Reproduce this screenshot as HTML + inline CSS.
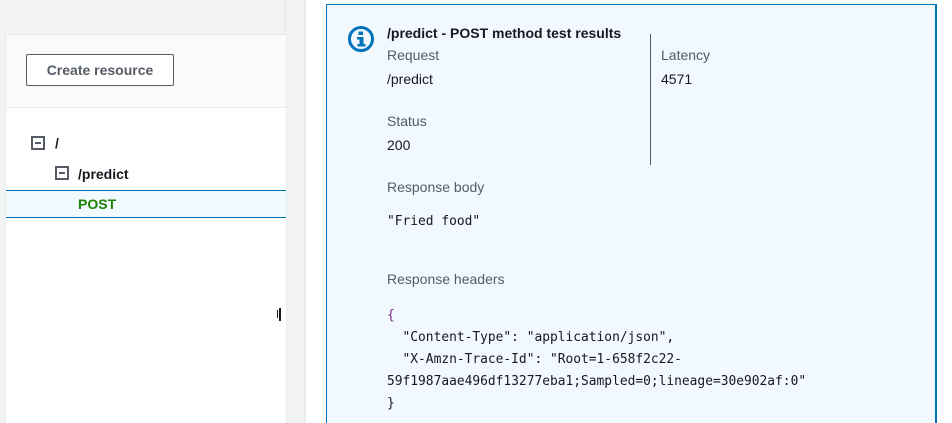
<!DOCTYPE html>
<html style="overflow:hidden"><head><style>
*{margin:0;padding:0;box-sizing:border-box}
body{width:952px;height:423px;overflow:hidden;background:#fff;font-family:"Liberation Sans",Arial,sans-serif;position:relative}
.a{position:absolute}
.lab{color:#545b64;font-size:14px}
.val{color:#16191f;font-size:14px}
.mono{font-family:"DejaVu Sans Mono","Liberation Mono",monospace;font-size:12.9px;color:#16191f}
</style></head><body>
<div class="a" style="left:0;top:0;width:304px;height:423px;background:#f2f3f3"></div>
<div class="a" style="left:304px;top:0;width:2px;height:423px;background:#e9ebed"></div>
<div class="a" style="left:285px;top:0;width:1px;height:423px;background:#e3e5e7"></div>
<div class="a" style="left:6px;top:35px;width:280px;height:400px;background:#fff;box-shadow:0 0 1px #ccc"></div>
<div class="a" style="left:6px;top:35px;width:280px;height:73px;background:#fafafa;border-bottom:1px solid #eaeded"></div>
<div class="a" style="left:26px;top:54px;width:148px;height:32px;border:1px solid #545b64;border-radius:2px;background:#fff;color:#545b64;font-weight:bold;font-size:14px;text-align:center;line-height:30px">Create resource</div>
<div class="a" style="left:31px;top:136px;width:14px;height:14px;border:2px solid #545b64"><div style="position:absolute;left:2px;top:4px;width:6px;height:2px;background:#545b64"></div></div>
<div class="a val" style="left:55px;top:135px;font-weight:bold">/</div>
<div class="a" style="left:55px;top:166px;width:14px;height:14px;border:2px solid #545b64"><div style="position:absolute;left:2px;top:4px;width:6px;height:2px;background:#545b64"></div></div>
<div class="a val" style="left:78px;top:166px;font-weight:bold">/predict</div>
<div class="a" style="left:6px;top:190px;width:280px;height:28px;background:#f1faff;border-top:1px solid #0073bb;border-bottom:1px solid #0073bb"></div>
<div class="a" style="left:78px;top:196px;color:#1d8102;font-weight:bold;font-size:14px">POST</div>
<div class="a" style="left:277px;top:310px;width:1px;height:8px;background:#16191f"></div>
<div class="a" style="left:279px;top:308px;width:2px;height:13px;background:#16191f"></div>
<div class="a" style="left:326px;top:4px;width:611px;height:440px;background:#f1f8fe;border:1px solid #0073bb;border-right-width:2px"></div>
<svg class="a" style="left:347px;top:25px" width="28" height="28" viewBox="0 0 28 28"><circle cx="14" cy="14" r="11.5" fill="none" stroke="#0073bb" stroke-width="3"/><rect x="11.5" y="6.5" width="4.5" height="3.5" fill="#0073bb"/><path d="M10 12h6.5v7h2v2.5h-8v-2.5h2v-4.5h-2.5z" fill="#0073bb"/></svg>
<div class="a val" style="left:387px;top:25px;font-weight:bold">/predict - POST method test results</div>
<div class="a lab" style="left:387px;top:47px">Request</div>
<div class="a val" style="left:387px;top:71px">/predict</div>
<div class="a lab" style="left:387px;top:113px">Status</div>
<div class="a val" style="left:387px;top:137px">200</div>
<div class="a" style="left:650px;top:34px;width:1px;height:131px;background:#545b64"></div>
<div class="a lab" style="left:661px;top:47px">Latency</div>
<div class="a val" style="left:661px;top:71px">4571</div>
<div class="a lab" style="left:387px;top:179px">Response body</div>
<div class="a mono" style="left:387px;top:214px">"Fried food"</div>
<div class="a lab" style="left:387px;top:271px">Response headers</div>
<div class="a mono" style="left:387px;top:305px;line-height:22px;white-space:pre"><span style="color:#7d2a7f">{</span>
  "Content-Type": "application/json",
  "X-Amzn-Trace-Id": "Root=1-658f2c22-
59f1987aae496df13277eba1;Sampled=0;lineage=30e902af:0"
}</div>
</body></html>
